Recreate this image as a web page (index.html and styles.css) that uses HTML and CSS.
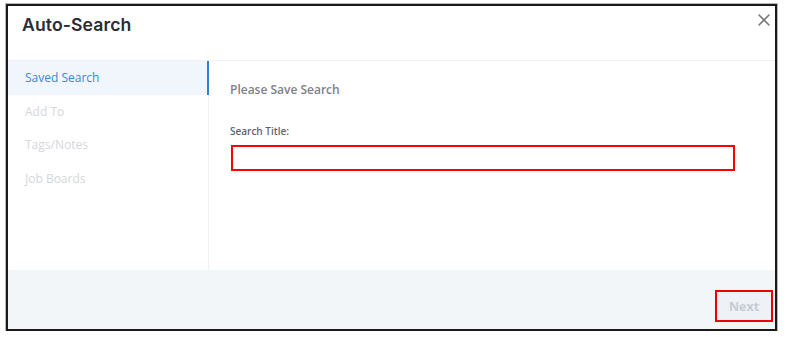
FILE: index.html
```html
<!DOCTYPE html>
<html>
<head>
<meta charset="utf-8">
<link rel="stylesheet" href="styles.css">
</head>
<body>
<div class="modal">
  <div class="header">
    <h1 class="title">Auto-Search</h1>
    <button class="close" aria-label="Close">
      <svg width="12" height="12" viewBox="0 0 12 12"><path d="M1 1L11 11M11 1L1 11" stroke="#7a7a7a" stroke-width="1.6" fill="none" stroke-linecap="round"/></svg>
    </button>
  </div>
  <div class="body">
    <nav class="sidebar">
      <div class="item active">Saved Search</div>
      <div class="item">Add To</div>
      <div class="item">Tags/Notes</div>
      <div class="item">Job Boards</div>
    </nav>
    <div class="content">
      <div class="heading">Please Save Search</div>
      <label class="label">Search Title:</label>
      <div class="input"></div>
    </div>
  </div>
  <div class="footer">
    <button class="next">Next</button>
  </div>
</div>
</body>
</html>
```
FILE: styles.css
```css
html, body { margin: 0; padding: 0; background: #fff; }
body { font-family: "Open Sans", "Noto Sans", sans-serif; }
.modal {
  margin: 4px 0 0 6px;
  width: 767px;
  height: 323px;
  border: 2px solid #1a1a1a;
  box-shadow: 0 0 0 1px #b8b8b8;
  display: flex;
  flex-direction: column;
  background: #fff;
}
.header {
  height: 55px;
  border-bottom: 1px solid #eff2f5;
  display: flex;
  align-items: flex-start;
  justify-content: space-between;
  box-sizing: border-box;
}
.title {
  margin: 7px 0 0 14px;
  font-family: "Inter", sans-serif;
  font-weight: 600;
  font-size: 17.6px;
  line-height: 24px;
  color: #2b2b36;
  letter-spacing: 0.1px;
}
.close {
  border: 0;
  background: none;
  padding: 0;
  margin: 8px 5px 0 0;
  width: 12px;
  height: 12px;
  display: flex;
}
.body {
  display: flex;
  height: 209px;
}
.sidebar {
  width: 200px;
  border-right: 1px solid #eff2f5;
  display: flex;
  flex-direction: column;
}
.item {
  height: 33.5px;
  line-height: 33.5px;
  padding-left: 17px;
  font-size: 12px;
  color: #d3d7dd;
  border-right: 2px solid transparent;
  margin-right: -1px;
}
.item.active {
  background: #f1f6fc;
  color: #3b86d6;
  border-right-color: #2f7fd8;
}
.content {
  flex: 1;
  padding: 20px 0 0 21px;
  display: flex;
  flex-direction: column;
  align-items: flex-start;
}
.heading {
  font-size: 12px;
  font-weight: 600;
  line-height: 18px;
  color: #7e8088;
}
.label {
  margin-top: 25px;
  font-size: 10px;
  font-weight: 600;
  line-height: 14px;
  color: #5f6270;
}
.input {
  margin-top: 7px;
  margin-left: 1px;
  width: 500px;
  height: 22px;
  border: 2px solid #ff0000;
}
.footer {
  flex: 1;
  background: #f3f6f9;
  display: flex;
  justify-content: flex-end;
  align-items: flex-start;
  padding: 20px 2px 0 0;
}
.next {
  width: 58px;
  height: 32px;
  border: 2px solid #ee0000;
  background: #eef1f5;
  color: #c5ccd4;
  font-family: "Open Sans", sans-serif;
  font-weight: 700;
  font-size: 12.5px;
  padding: 0;
}
```
